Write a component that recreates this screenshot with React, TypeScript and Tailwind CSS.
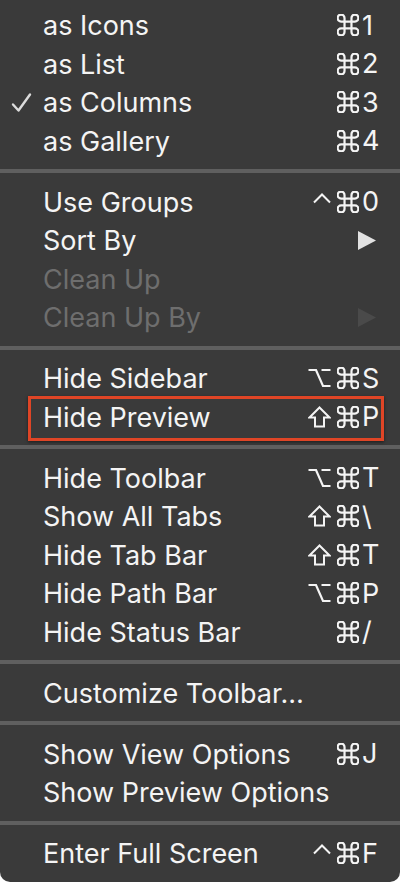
import type { ReactNode } from 'react'

type Mod = 'ctrl' | 'opt' | 'shift' | 'cmd'

interface Item {
  label: string
  mods?: Mod[]
  keyChar?: string
  checked?: boolean
  disabled?: boolean
  submenu?: boolean
  highlight?: boolean
}

const groups: Item[][] = [
  [
    { label: 'as Icons', mods: ['cmd'], keyChar: '1' },
    { label: 'as List', mods: ['cmd'], keyChar: '2' },
    { label: 'as Columns', mods: ['cmd'], keyChar: '3', checked: true },
    { label: 'as Gallery', mods: ['cmd'], keyChar: '4' },
  ],
  [
    { label: 'Use Groups', mods: ['ctrl', 'cmd'], keyChar: '0' },
    { label: 'Sort By', submenu: true },
    { label: 'Clean Up', disabled: true },
    { label: 'Clean Up By', disabled: true, submenu: true },
  ],
  [
    { label: 'Hide Sidebar', mods: ['opt', 'cmd'], keyChar: 'S' },
    { label: 'Hide Preview', mods: ['shift', 'cmd'], keyChar: 'P', highlight: true },
  ],
  [
    { label: 'Hide Toolbar', mods: ['opt', 'cmd'], keyChar: 'T' },
    { label: 'Show All Tabs', mods: ['shift', 'cmd'], keyChar: '\\' },
    { label: 'Hide Tab Bar', mods: ['shift', 'cmd'], keyChar: 'T' },
    { label: 'Hide Path Bar', mods: ['opt', 'cmd'], keyChar: 'P' },
    { label: 'Hide Status Bar', mods: ['cmd'], keyChar: '/' },
  ],
  [{ label: 'Customize Toolbar…' }],
  [
    { label: 'Show View Options', mods: ['cmd'], keyChar: 'J' },
    { label: 'Show Preview Options' },
  ],
  [{ label: 'Enter Full Screen', mods: ['ctrl', 'cmd'], keyChar: 'F' }],
]

function ModIcon({ mod }: { mod: Mod }) {
  const common = {
    fill: 'none',
    stroke: 'currentColor',
    strokeLinecap: 'round' as const,
    strokeLinejoin: 'round' as const,
  }
  if (mod === 'cmd') {
    return (
      <svg width="22" height="22" viewBox="2.5 2.5 19 19" {...common} strokeWidth={1.9}>
        <path d="M15 6v12a3 3 0 1 0 3-3H6a3 3 0 1 0 3 3V6a3 3 0 1 0-3 3h12a3 3 0 1 0-3-3" />
      </svg>
    )
  }
  if (mod === 'opt') {
    return (
      <svg width="23" height="20" viewBox="0 0 23 20" {...common} strokeWidth={2.2} strokeLinecap="butt" strokeLinejoin="miter">
        <path d="M0.5 2h7.5l7 16h7.5M13.5 2h9" />
      </svg>
    )
  }
  if (mod === 'shift') {
    return (
      <svg width="23" height="22" viewBox="0 0 23 22" {...common} strokeWidth={2} strokeLinecap="butt" strokeLinejoin="miter">
        <path d="M11.5 1.5 L21.5 11.5 H16 V20.5 H7 V11.5 H1.5 Z" />
      </svg>
    )
  }
  return (
    <svg width="18" height="20" viewBox="0 0 18 20" {...common} strokeWidth={2} strokeLinecap="butt" strokeLinejoin="miter">
      <path d="M1 10.5 L9 2.5 L17 10.5" />
    </svg>
  )
}

function Check() {
  return (
    <svg width="21" height="21" viewBox="0 0 21 21" fill="none" stroke="#dcdcdc" strokeWidth={2.4} strokeLinecap="round" strokeLinejoin="round">
      <path d="M2 12.5 L7.5 18.5 L19 2.5" />
    </svg>
  )
}

function Arrow({ dim }: { dim?: boolean }) {
  return (
    <svg width="18" height="19" viewBox="0 0 18 19">
      <path d="M0 0 L18 9.5 L0 19 Z" fill={dim ? '#4a4a4a' : '#e2e2e2'} />
    </svg>
  )
}

function Row({ item }: { item: Item }) {
  let right: ReactNode = null
  if (item.submenu) {
    right = (
      <div className="pr-[24px] flex items-center">
        <Arrow dim={item.disabled} />
      </div>
    )
  } else if (item.keyChar) {
    right = (
      <div className="flex items-center pr-[18px]">
        <div className="flex items-center gap-[6px]">
          {item.mods?.map((m, i) => (
            <ModIcon key={i} mod={m} />
          ))}
        </div>
        <span className="w-[20px] ml-[3px] leading-none">{item.keyChar}</span>
      </div>
    )
  }

  return (
    <div
      className={`relative h-[38.5px] flex items-center ${
        item.disabled ? 'text-[#6e6e6e]' : 'text-[#f4f4f4]'
      }`}
    >
      <div className="w-[43px] pl-[11px] flex items-center">{item.checked && <Check />}</div>
      <span className="flex-1 leading-none whitespace-nowrap pt-[1px]">{item.label}</span>
      {right}
      {item.highlight && (
        <div className="absolute left-[28px] right-[16px] top-[-1.5px] bottom-[-5px] border-[3px] border-[#df4526] shadow-[0_1px_3px_rgba(0,0,0,0.5)]" />
      )}
    </div>
  )
}

export default function App() {
  return (
    <div className="w-[400px] h-[882px] bg-white">
      <div
        className="w-[400px] h-[882px] bg-[#3a3a3a] rounded-b-[10px] pt-[6px] text-[27px]"
        style={{ fontFamily: 'Inter, "Noto Sans", sans-serif' }}
      >
        {groups.map((g, gi) => (
          <div key={gi}>
            {gi > 0 && (
              <div className="h-[22.5px] flex items-center">
                <div className="w-full h-[4px] bg-[#5f5f5f]" />
              </div>
            )}
            {g.map((item, ii) => (
              <Row key={ii} item={item} />
            ))}
          </div>
        ))}
      </div>
    </div>
  )
}
